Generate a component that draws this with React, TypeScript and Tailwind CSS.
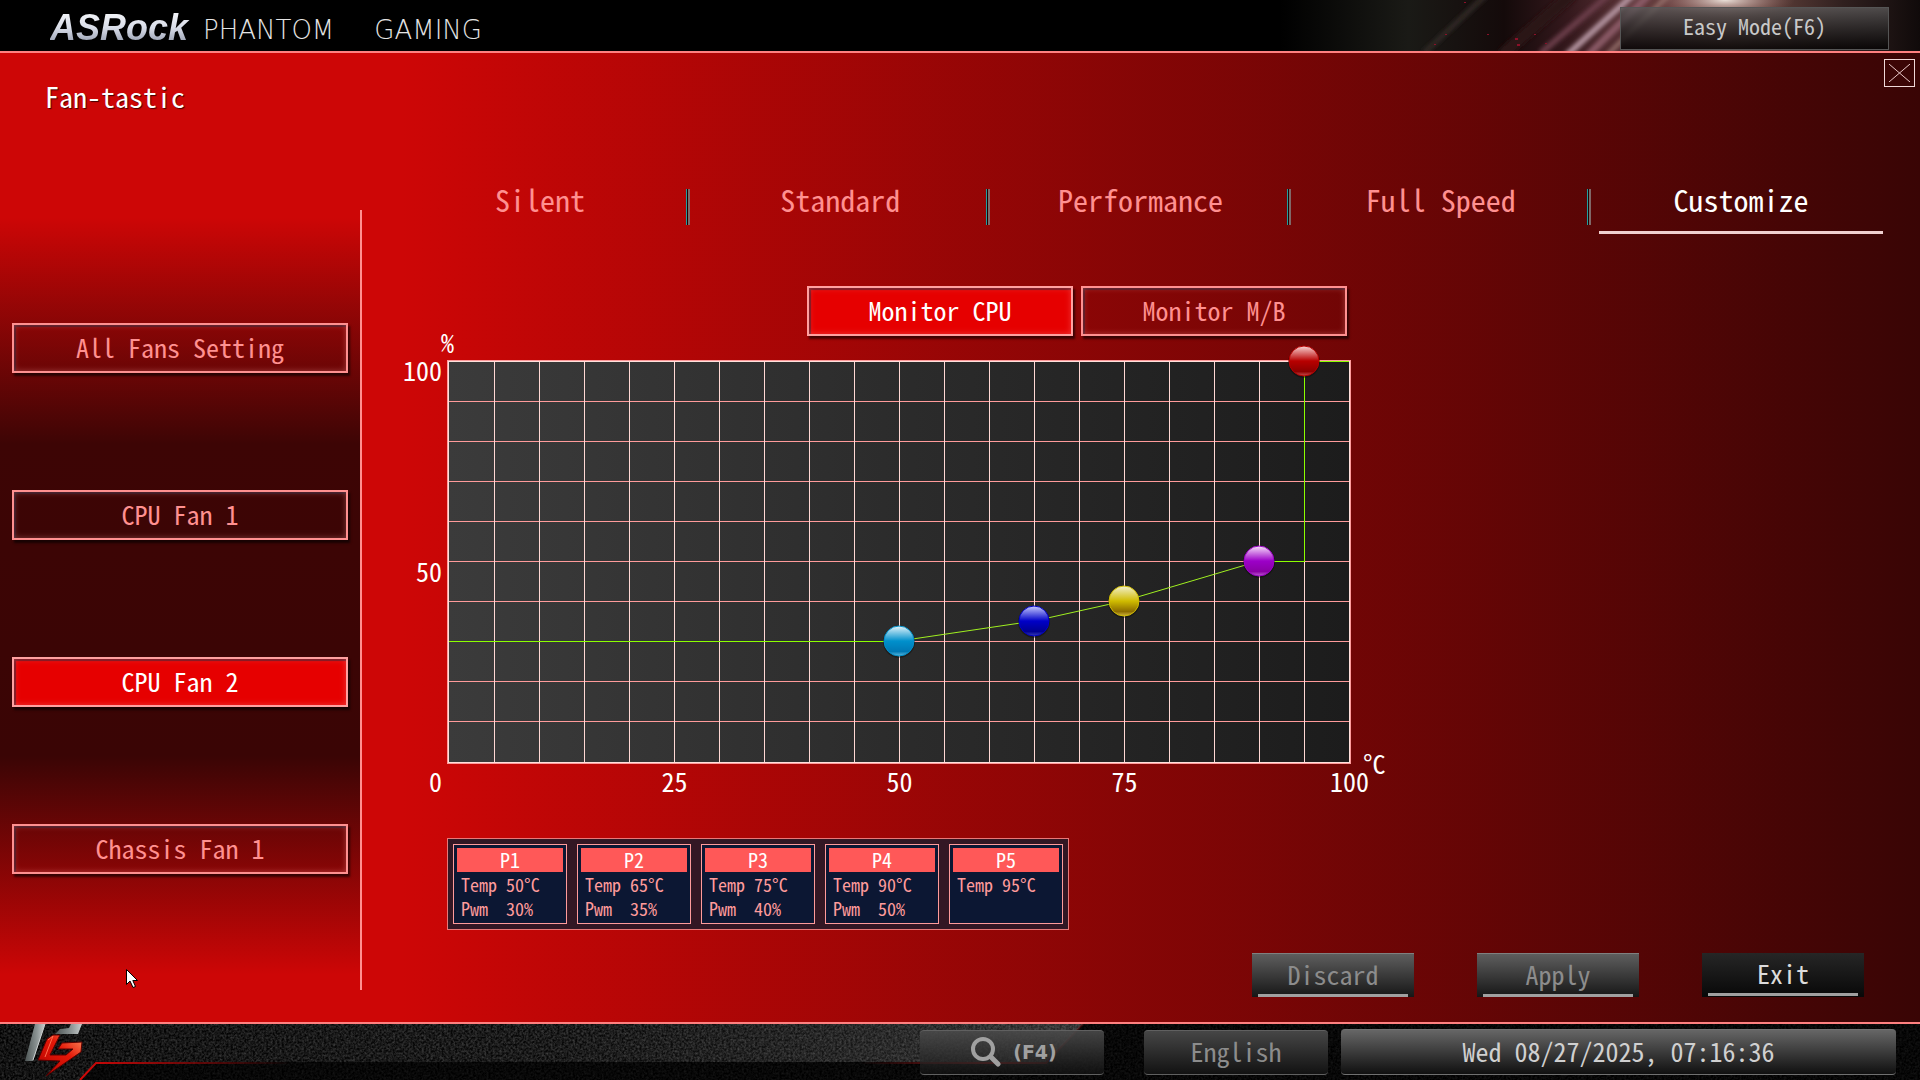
import React, { useState } from 'react';

interface FanPoint {
  name: string;
  temp: number;
  pwm: number;
  top: string;
  mid: string;
  low: string;
  rim: string;
}

const fans = ['All Fans Setting', 'CPU Fan 1', 'CPU Fan 2', 'Chassis Fan 1'];
const modes = ['Silent', 'Standard', 'Performance', 'Full Speed', 'Customize'];
const monitors = ['Monitor CPU', 'Monitor M/B'];

const points: FanPoint[] = [
  { name: 'P1', temp: 50, pwm: 30, top: '#e4f4fa', mid: '#0090cc', low: '#0078b4', rim: '#5fbce0' },
  { name: 'P2', temp: 65, pwm: 35, top: '#c8ccff', mid: '#0000c8', low: '#000090', rim: '#3a40b8' },
  { name: 'P3', temp: 75, pwm: 40, top: '#f2f0d0', mid: '#d0bc00', low: '#8c6c00', rim: '#d2b43c' },
  { name: 'P4', temp: 90, pwm: 50, top: '#f8e0fa', mid: '#9c00c8', low: '#8a00a4', rim: '#c060d4' },
  { name: 'P5', temp: 95, pwm: 100, top: '#f8d4d4', mid: '#b80000', low: '#8c0000', rim: '#cc5050' },
];

// chart space: 9px per degree, 4px per percent
const cx = (temp: number) => 2 + temp * 9;
const cy = (pwm: number) => 1 + (100 - pwm) * 4;

const boxBase =
  'h-[50px] cursor-pointer border-2 pb-[3px] text-[26px] leading-[32px] shadow-[inset_0_0_6px_rgba(255,160,160,0.35),inset_2px_2px_1px_rgba(30,20,40,0.6),2px_3px_2px_rgba(0,0,0,0.6)]';
const boxIdle = 'border-[#ff9090] text-[#ff9090]';
const boxActive = 'border-[#ffa0a0] bg-[#e60000] text-white';

const HeaderRays = () => (
  <svg className="absolute top-0 right-0 h-full w-[640px]" viewBox="0 0 640 51" preserveAspectRatio="none" aria-hidden="true">
    <defs>
      <linearGradient id="glow" x1="0" x2="1">
        <stop offset="0" stopColor="#1a1a16" stopOpacity="0" />
        <stop offset="0.2" stopColor="#1a1a16" />
        <stop offset="0.35" stopColor="#140a0a" />
        <stop offset="0.45" stopColor="#34181c" />
        <stop offset="0.55" stopColor="#5c3438" />
        <stop offset="0.7" stopColor="#785048" />
        <stop offset="0.88" stopColor="#30201f" />
        <stop offset="1" stopColor="#100a0a" />
      </linearGradient>
      <radialGradient id="flare">
        <stop offset="0" stopColor="#f0e8e0" stopOpacity="0.95" />
        <stop offset="1" stopColor="#a07070" stopOpacity="0" />
      </radialGradient>
      <filter id="soft">
        <feGaussianBlur stdDeviation="2" />
      </filter>
    </defs>
    <rect width="640" height="51" fill="url(#glow)" />
    <g filter="url(#soft)" strokeLinecap="round">
      <path d="M145 52 L205 -4" stroke="#302c28" strokeWidth="5" />
      <path d="M225 52 L290 -4" stroke="#2c1418" strokeWidth="12" />
      <path d="M262 52 L330 -6" stroke="#6a3c4a" strokeWidth="6" />
      <path d="M288 54 L354 -6" stroke="#b494a0" strokeWidth="6" />
      <path d="M309 54 L370 -6" stroke="#8a5a66" strokeWidth="7" />
      <path d="M328 54 L390 -6" stroke="#94706a" strokeWidth="4" />
    </g>
    <ellipse cx="445" cy="0" rx="70" ry="18" fill="url(#flare)" />
    <g fill="#8a1028">
      <rect x="184" y="2" width="2" height="1" />
      <rect x="165" y="34" width="2" height="1" />
      <rect x="154" y="44" width="2" height="1" />
      <rect x="207" y="34" width="2" height="1" />
      <rect x="235" y="38" width="3" height="2" />
      <rect x="237" y="44" width="3" height="2" />
      <rect x="254" y="34" width="2" height="1" />
      <rect x="265" y="43" width="2" height="1" />
    </g>
  </svg>
);

const FooterBackdrop = () => (
  <svg className="absolute inset-0 h-full w-full" aria-hidden="true">
    <defs>
      <filter id="grain" x="0" y="0" width="100%" height="100%" colorInterpolationFilters="sRGB">
        <feTurbulence type="fractalNoise" baseFrequency="0.45" numOctaves="2" seed="4" />
        <feColorMatrix values="0.4 0 0 0 -0.11  0.4 0 0 0 -0.11  0.4 0 0 0 -0.11  0 0 0 0 1" />
      </filter>
      <linearGradient id="lit" gradientUnits="userSpaceOnUse" x1="0" x2="1080">
        <stop offset="0" stopColor="#000" stopOpacity="0.2" />
        <stop offset="0.5" stopColor="#444" stopOpacity="0.1" />
        <stop offset="1" stopColor="#888" stopOpacity="0.3" />
      </linearGradient>
      <linearGradient id="redLeft" gradientUnits="userSpaceOnUse" x1="80" x2="290">
        <stop offset="0" stopColor="#d40808" />
        <stop offset="1" stopColor="#d40808" stopOpacity="0" />
      </linearGradient>
      <linearGradient id="redRight" gradientUnits="userSpaceOnUse" x1="860" x2="1083">
        <stop offset="0" stopColor="#8a1414" stopOpacity="0" />
        <stop offset="0.6" stopColor="#8a1414" />
        <stop offset="1" stopColor="#8a1414" stopOpacity="0.3" />
      </linearGradient>
    </defs>
    <rect width="100%" height="100%" filter="url(#grain)" />
    <path d="M0 0 H1083 L1046 38 H96 L80 56 H0 Z" fill="url(#lit)" />
    <path d="M96 38 H1046 L1083 0 H1920 V56 H80 Z" fill="#000" fillOpacity="0.65" />
    <path d="M80 56 L96 39 H290" fill="none" stroke="url(#redLeft)" strokeWidth="2" />
    <path d="M860 39 H1046 L1083 0" fill="none" stroke="url(#redRight)" strokeWidth="2" />
  </svg>
);

const PhantomMark = () => (
  <svg className="relative h-[56px] w-[100px]" viewBox="0 0 100 56" aria-hidden="true">
    <defs>
      <linearGradient id="steel" x1="0" x2="1">
        <stop offset="0" stopColor="#4c5454" />
        <stop offset="0.6" stopColor="#8c9494" />
        <stop offset="1" stopColor="#c8cccc" />
      </linearGradient>
      <linearGradient id="blade" x1="0" x2="1" y1="1" y2="0">
        <stop offset="0" stopColor="#b00000" />
        <stop offset="0.6" stopColor="#e41808" />
        <stop offset="1" stopColor="#ff9060" />
      </linearGradient>
    </defs>
    <path d="M35 0 H45 L33 37 H25 Z" fill="url(#steel)" />
    <path d="M71 0 H82 L78 10 H55 L60 5 L69 4 Z" fill="url(#steel)" />
    <path d="M47 15 L53 11 H60 L50 31 H66 L73 25 H58 L62 19 L82 18 L81 28 L46 52 L60 37 L38 36 Z" fill="url(#blade)" stroke="#5a0000" strokeWidth="1" />
    <path d="M48 16 L53 12 L45 33" fill="none" stroke="#ff7050" strokeWidth="1" />
    <path d="M45 0 L33 36" stroke="#c8cccc" strokeWidth="1" />
  </svg>
);

const FanChart = () => {
  const curve = points
    .slice(0, 4)
    .map((p) => `${cx(p.temp)},${cy(p.pwm)}`)
    .join(' ');

  return (
    <svg className="block h-[404px] w-[904px] overflow-visible" viewBox="0 0 904 404" role="img" aria-label="Fan speed by temperature">
      <defs>
        <linearGradient id="plot" x1="0" x2="1">
          <stop offset="0" stopColor="#3b3b3b" />
          <stop offset="1" stopColor="#1c1c1c" />
        </linearGradient>
        {points.map((p) => (
          <linearGradient key={p.name} id={`ball-${p.name}`} x1="0" x2="0" y1="0" y2="1">
            <stop offset="0" stopColor={p.top} />
            <stop offset="0.5" stopColor={p.mid} />
            <stop offset="0.85" stopColor={p.low} />
            <stop offset="1" stopColor={p.rim} />
          </linearGradient>
        ))}
      </defs>
      <g shapeRendering="crispEdges">
        <rect width="904" height="404" fill="#ff9b9b" />
        <rect x="1" y="1" width="902" height="402" fill="#ffe0dc" />
        <rect x="2" y="2" width="900" height="400" fill="url(#plot)" />
        {Array.from({ length: 9 }, (_, i) => (
          <rect key={i} x="2" y={41 + i * 40} width="900" height="1" fill="#ff9b9b" />
        ))}
        {Array.from({ length: 19 }, (_, i) => (
          <rect key={i} x={47 + i * 45} y="2" width="1" height="400" fill="#ffd8d4" />
        ))}
        <path d="M2 281 H452 v1 H2 Z" fill="#8cff00" />
        <path d="M812 201 H857 v1 H812 Z" fill="#8cff00" />
        <path d="M857 1 h1 V202 h-1 Z" fill="#8cff00" />
        <path d="M857 1 H902 v1 H857 Z" fill="#8cff00" />
      </g>
      <polyline points={curve} fill="none" stroke="#a0f020" strokeWidth="1" />
      {points.map((p) => (
        <g key={p.name}>
          <circle cx={cx(p.temp)} cy={cy(p.pwm) + 1} r="16" fill="#000" fillOpacity="0.3" />
          <circle cx={cx(p.temp)} cy={cy(p.pwm)} r="15" fill={`url(#ball-${p.name})`} stroke={p.mid} strokeWidth="1" />
        </g>
      ))}
    </svg>
  );
};

const App: React.FC = () => {
  const [fan, setFan] = useState('CPU Fan 2');
  const [mode, setMode] = useState('Customize');
  const [monitor, setMonitor] = useState('Monitor CPU');

  return (
    <div className='relative flex min-h-screen flex-col bg-black font-["Noto_Sans_Mono_CJK_JP","Noto_Sans_CJK_JP",monospace] text-white'>
      <header className="relative flex h-[51px] items-center justify-between bg-black pr-[31px] pl-[50px]">
        <HeaderRays />
        <div className="relative mt-1 flex items-center">
          <span className='bg-gradient-to-b from-white via-[#d8dce8] to-[#7c8498] bg-clip-text pr-[3px] font-["Liberation_Sans",sans-serif] text-[36px] leading-[44px] font-bold text-transparent italic'>
            ASRock
          </span>
          <span className='mt-1 ml-3 flex gap-10 font-["DejaVu_Sans",sans-serif] text-[26px] leading-[40px] font-extralight text-[#e4e4e4]'>
            <span>PHANTOM</span>
            <span>GAMING</span>
          </span>
        </div>
        <button className="relative mt-[5px] h-[43px] w-[269px] border border-[#555] bg-gradient-to-b from-[#5a5858]/80 to-[#080606]/90 pb-[6px] text-[22px] text-[#c8c8c8]">
          Easy Mode(F6)
        </button>
      </header>

      <main className="flex flex-1 border-y-2 border-[#ff8080] bg-[linear-gradient(to_right,#cd0606_21%,#390505)]">
        <div className="flex w-[362px] flex-col">
          <h1 className="h-[157px] pt-[25px] pl-[45px] text-[28px] leading-[36px] [text-shadow:1px_1px_1px_#400]">Fan-tastic</h1>
          <nav className="flex h-[780px] flex-col gap-[117px] border-r-2 border-[#ff9090] bg-[linear-gradient(to_bottom,#cd0606_1%,#3d0505_30%,#3a0505_70%,#cd0606_98%)] pt-[113px] pr-3 pl-3">
            {fans.map((name) => (
              <button key={name} onClick={() => setFan(name)} className={`${boxBase} ${fan === name ? boxActive : boxIdle}`}>
                {name}
              </button>
            ))}
          </nav>
        </div>

        <div className="flex flex-1 flex-col">
          <div className="flex justify-end pt-[6px] pr-[5px]">
            <button aria-label="Close" className="h-[28px] w-[31px] border border-[#f0d8d8] p-1">
              <svg className="h-full w-full" viewBox="0 0 21 18" preserveAspectRatio="none" stroke="#e8c8c8" strokeWidth="1">
                <path d="M0 0 L21 18 M21 0 L0 18" />
              </svg>
            </button>
          </div>

          <nav className="mt-[90px] mr-[29px] ml-7 flex">
            {modes.map((name, i) => (
              <div key={name} className="flex h-[57px] flex-1 items-start">
                <button
                  onClick={() => setMode(name)}
                  className={`mx-2 h-[57px] flex-1 border-b-[3px] pb-[10px] text-[30px] leading-[40px] ${
                    mode === name ? 'border-[#f0d0d0] text-white' : 'border-transparent text-[#ff9090]'
                  }`}
                >
                  {name}
                </button>
                {i < modes.length - 1 && (
                  <span className="-ml-1 mt-[12px] h-[36px] w-1 border-r-2 border-l border-r-[#806868] border-l-[#20a0a0] bg-[#200000]" />
                )}
              </div>
            ))}
          </nav>

          <div className="mt-[52px] flex h-[74px] w-[988px] items-start gap-2 pr-[3px]">
            <span className="mr-auto ml-[79px] self-end pb-[2px] text-[26px] leading-[32px]">%</span>
            {monitors.map((name) => (
              <button key={name} onClick={() => setMonitor(name)} className={`w-[266px] ${boxBase} ${monitor === name ? boxActive : boxIdle}`}>
                {name}
              </button>
            ))}
          </div>

          <div className="flex text-[26px] leading-[20px]">
            <div className="flex w-[85px] flex-col gap-[181px] pr-[5px] text-right">
              <span>100</span>
              <span>50</span>
            </div>
            <FanChart />
            <span className="-mb-[9px] ml-3 self-end">°C</span>
          </div>
          <div className="flex h-[35px] pt-[7px] text-[26px] leading-[20px]">
            <span className="w-[85px] pr-[5px] text-right">0</span>
            <div className="grid w-[1015px] grid-cols-4 pl-[115px] text-center">
              <span>25</span>
              <span>50</span>
              <span>75</span>
              <span>100</span>
            </div>
          </div>

          <div className="mt-[39px] ml-[85px] flex gap-[10px] self-start border border-[#e87878] bg-[#331724] px-[5px] pt-[5px] pb-[5px]">
            {points.map((p) => (
              <div key={p.name} className="h-[80px] w-[114px] border border-[#ff9b9b] bg-[#0c1733] p-[3px] text-[18px] leading-[24px] text-[#ff9b9b]">
                <div className="bg-[#ff5858] text-center text-[20px] text-white">{p.name}</div>
                <dl className="grid grid-cols-[45px_1fr] pl-1">
                  <dt>Temp</dt>
                  <dd>{p.temp}°C</dd>
                  {p.pwm < 100 && (
                    <>
                      <dt>Pwm</dt>
                      <dd>{p.pwm}%</dd>
                    </>
                  )}
                </dl>
              </div>
            ))}
          </div>

          <div className="mt-[23px] flex justify-end gap-[63px] pr-[56px] pb-[25px] text-[26px]">
            {['Discard', 'Apply', 'Exit'].map((name) => (
              <button
                key={name}
                className={`flex h-[44px] w-[162px] flex-col items-stretch px-[6px] ${
                  name === 'Exit'
                    ? 'bg-[linear-gradient(to_bottom,#262626,#080808)] text-[#dcdcdc]'
                    : 'border-t border-[#808080] bg-[linear-gradient(to_bottom,#5e5e5e,#161616)] text-[#8c8c8c]'
                }`}
              >
                <span className="h-[40px] leading-[40px]">{name}</span>
                <span className="h-[3px] bg-[#a0a0a0]" />
              </button>
            ))}
          </div>
        </div>
      </main>

      <footer className="relative flex h-[56px] items-center bg-[#0c0c0c] pr-6">
        <FooterBackdrop />
        <PhantomMark />
        <button className='relative ml-auto flex h-[45px] w-[184px] items-center justify-center gap-3 rounded border-y border-[#606060] bg-gradient-to-b from-[#4a4a4a]/90 to-[#141414]/70 pl-1 font-["DejaVu_Sans",sans-serif] text-[19px] font-bold text-[#a0a0a0]'>
          <svg className="h-[30px] w-[30px]" viewBox="0 0 30 30" fill="none" stroke="#a0a0a0" strokeLinecap="round" aria-hidden="true">
            <circle cx="12" cy="12" r="10" strokeWidth="4" />
            <path d="M20 20 L27 27" strokeWidth="5" />
          </svg>
          (F4)
        </button>
        <button className="relative ml-[40px] h-[45px] w-[184px] rounded border-y border-[#606060] bg-[linear-gradient(to_bottom,#464646,#121212)] pb-[3px] text-[26px] leading-[32px] text-[#8c8c8c]">
          English
        </button>
        <time className="relative ml-[13px] h-[46px] w-[555px] rounded border-y border-[#707070] bg-[linear-gradient(to_bottom,#666,#101010)] text-center text-[26px] leading-[41px] text-[#d0d0d0]">
          Wed 08/27/2025, 07:16:36
        </time>
      </footer>

      <svg className="pointer-events-none absolute top-[969px] left-[126px] h-[19px] w-[12px]" viewBox="0 0 12 19" aria-hidden="true">
        <path d="M0.500 0.500 V15.500 L4 12 L7 18.500 L9.500 17.500 L6.800 11.500 H11.500 Z" fill="#fff" stroke="#000" />
      </svg>
    </div>
  );
};

export default App;
